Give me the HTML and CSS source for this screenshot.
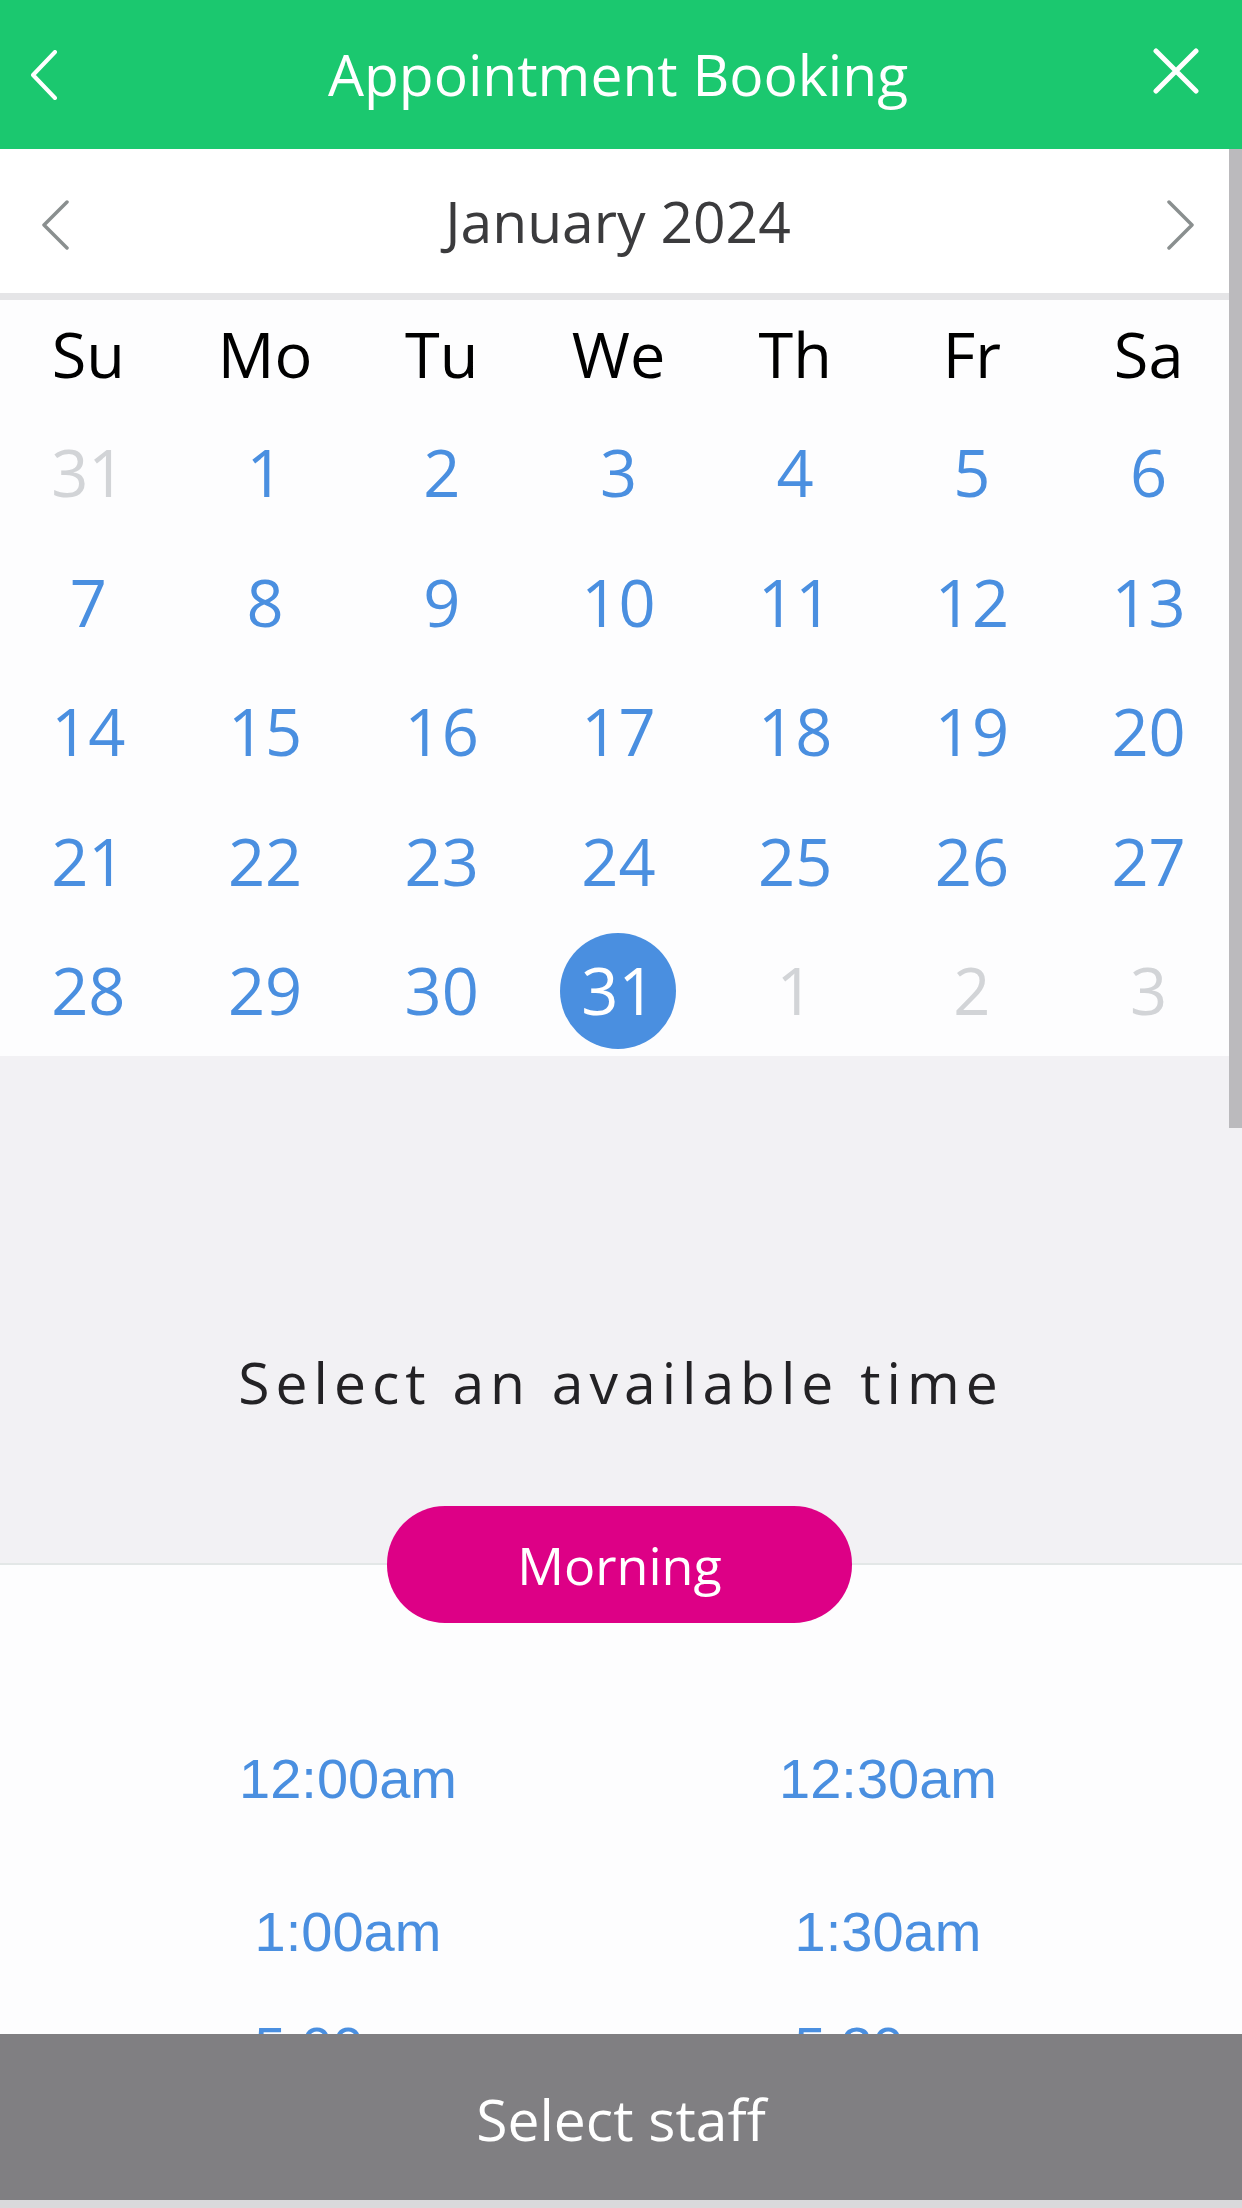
FILE: index.html
```html
<!DOCTYPE html>
<html lang="en">
<head>
    <meta charset="UTF-8">
    <meta name="viewport" content="width=device-width, initial-scale=1.0">
    <title>Appointment Booking</title>
    <link rel="stylesheet" href="styles.css">
</head>
<body>

    <header class="top-bar">
        <button class="icon-btn" aria-label="Back">
            <svg width="26" height="50" viewBox="0 0 26 50"><polyline points="24,2 2,25 24,48" fill="none" stroke="#fff" stroke-width="4" stroke-linecap="round" stroke-linejoin="round"/></svg>
        </button>
        <h1>Appointment Booking</h1>
        <button class="icon-btn close" aria-label="Close">
            <svg width="46" height="46" viewBox="0 0 46 46"><path d="M3 3 L43 43 M43 3 L3 43" fill="none" stroke="#fff" stroke-width="5" stroke-linecap="round"/></svg>
        </button>
    </header>

    <div class="month-bar">
        <button class="icon-btn" aria-label="Previous month">
            <svg width="27" height="50" viewBox="0 0 27 50"><polyline points="25,2 2,25 25,48" fill="none" stroke="#8a8f8f" stroke-width="3.5" stroke-linecap="round" stroke-linejoin="round"/></svg>
        </button>
        <span class="month-title">January 2024</span>
        <button class="icon-btn" aria-label="Next month">
            <svg width="27" height="50" viewBox="0 0 27 50"><polyline points="2,2 25,25 2,48" fill="none" stroke="#8a8f8f" stroke-width="3.5" stroke-linecap="round" stroke-linejoin="round"/></svg>
        </button>
    </div>

    <div class="calendar">
        <div class="weekdays">
            <span>Su</span><span>Mo</span><span>Tu</span><span>We</span><span>Th</span><span>Fr</span><span>Sa</span>
        </div>
        <div class="days">
            <span class="day muted">31</span><span class="day">1</span><span class="day">2</span><span class="day">3</span><span class="day">4</span><span class="day">5</span><span class="day">6</span>
            <span class="day">7</span><span class="day">8</span><span class="day">9</span><span class="day">10</span><span class="day">11</span><span class="day">12</span><span class="day">13</span>
            <span class="day">14</span><span class="day">15</span><span class="day">16</span><span class="day">17</span><span class="day">18</span><span class="day">19</span><span class="day">20</span>
            <span class="day">21</span><span class="day">22</span><span class="day">23</span><span class="day">24</span><span class="day">25</span><span class="day">26</span><span class="day">27</span>
            <span class="day">28</span><span class="day">29</span><span class="day">30</span><span class="day selected"><b>31</b></span><span class="day muted">1</span><span class="day muted">2</span><span class="day muted">3</span>
        </div>
    </div>

    <section class="time-intro">
        <p>Select an available time</p>
    </section>

    <div class="period">
        <span class="period-pill">Morning</span>
    </div>

    <div class="slots">
        <a class="slot">12:00am</a>
        <a class="slot">12:30am</a>
        <a class="slot">1:00am</a>
        <a class="slot">1:30am</a>
        <a class="slot">5:00am</a>
        <a class="slot">5:30am</a>
    </div>

    <div class="scroll-thumb"></div>

    <footer class="bottom-bar">Select staff</footer>

</body>
</html>
```

FILE: styles.css
```css
body {
    margin: 0;
    font-family: "Open Sans", "Noto Sans", sans-serif;
    background-color: #fdfdfe;
    width: 1242px;
    height: 2208px;
    overflow: hidden;
    position: relative;
}

.icon-btn {
    background: none;
    border: none;
    padding: 0;
    display: flex;
    align-items: center;
    cursor: pointer;
}

/* header */

.top-bar {
    height: 149px;
    background-color: #1bc86f;
    display: flex;
    align-items: center;
    justify-content: space-between;
    padding: 0 43px 0 31px;
}

.top-bar .icon-btn {
    width: 46px;
}

.top-bar .close {
    margin-top: -8px;
}

.top-bar h1 {
    margin: 0 0 0 6px;
    color: #fff;
    font-size: 57px;
    font-weight: 400;
    line-height: 149px;
}

/* month switcher */

.month-bar {
    background-color: #fff;
    border-bottom: 7px solid #e5e5e7;
    display: flex;
    align-items: center;
    justify-content: space-between;
    padding: 8px 48px 0 42px;
    box-sizing: border-box;
    height: 151px;
}

.month-title {
    font-size: 57px;
    color: #3b3b3d;
    line-height: 136px;
    margin-top: -8px;
}

/* calendar grid */

.calendar {
    background-color: #fdfdfe;
}

.weekdays,
.days {
    display: grid;
    grid-template-columns: repeat(7, 1fr);
    text-align: center;
    padding-right: 5px;
}

.weekdays span {
    font-size: 63px;
    line-height: 108px;
    color: #000;
}

.day {
    font-size: 65px;
    line-height: 129.5px;
    color: #4a8fe0;
    display: flex;
    justify-content: center;
    align-items: center;
    height: 129.5px;
}

.day.muted {
    color: #d2d4d7;
}

.day.selected b {
    font-weight: 400;
    width: 116px;
    height: 116px;
    border-radius: 50%;
    background-color: #4a8fe0;
    color: #fff;
    display: flex;
    justify-content: center;
    align-items: center;
}

/* time picker */

.time-intro {
    background-color: #f2f1f4;
    padding: 289px 0 87px;
}

.time-intro p {
    margin: 0;
    text-align: center;
    font-size: 57px;
    line-height: 74px;
    letter-spacing: 6px;
    color: #232225;
}

.period {
    height: 117px;
    display: flex;
    justify-content: center;
    background: linear-gradient(to bottom, #f2f1f4 0, #f2f1f4 57px, #e3e7e7 57px, #e3e7e7 59px, #fdfdfe 59px);
}

.period-pill {
    width: 465px;
    height: 117px;
    border-radius: 58px;
    background-color: #dd0086;
    color: #fff;
    font-size: 52px;
    display: flex;
    justify-content: center;
    align-items: center;
    margin-left: -3px;
}

.slots {
    display: grid;
    grid-template-columns: 540px 540px;
    grid-template-rows: 153px 115px 153px;
    padding: 124px 84px 0 78px;
}

.slot {
    font-family: "Liberation Sans", Arial, sans-serif;
    font-size: 56px;
    line-height: 64px;
    color: #4a8fe0;
    text-align: center;
}

/* overlays */

.scroll-thumb {
    position: absolute;
    top: 149px;
    right: 0;
    width: 13px;
    height: 979px;
    background-color: #bbbabd;
}

.bottom-bar {
    position: absolute;
    left: 0;
    right: 0;
    bottom: 0;
    height: 166px;
    border-bottom: 8px solid #d9d9db;
    background-color: #807f82;
    color: #fff;
    font-size: 57px;
    line-height: 170px;
    text-align: center;
}
```
